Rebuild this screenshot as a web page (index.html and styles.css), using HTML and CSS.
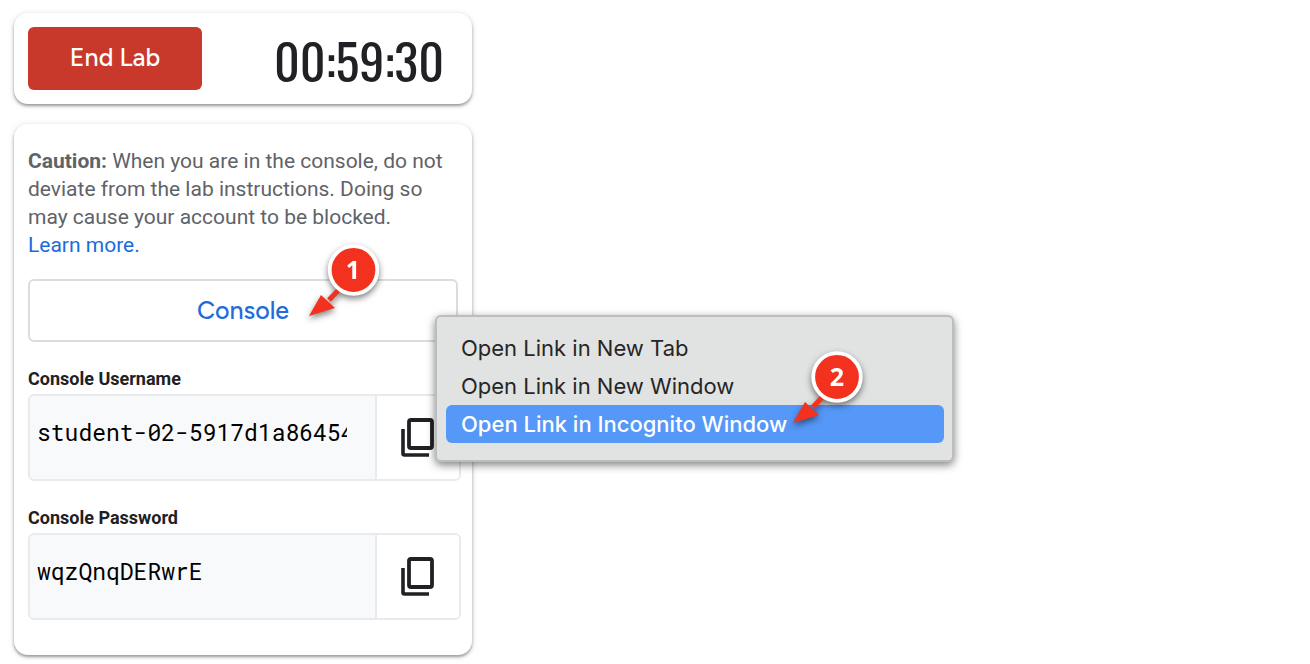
FILE: index.html
```html
<!DOCTYPE html>
<html lang="en">
<head>
<meta charset="utf-8">
<title>Lab controls</title>
<link rel="stylesheet" href="styles.css">
</head>
<body>
<svg class="sprite" aria-hidden="true">
  <symbol id="copy" viewBox="0 0 36 40">
    <rect x="9" y="2" width="23" height="28" rx="2" fill="none" stroke="currentColor" stroke-width="3.800"/>
    <path d="M3 11v24.500a1.500 1.500 0 0 0 1.500 1.500H29" fill="none" stroke="currentColor" stroke-width="3.600"/>
  </symbol>
</svg>
<main class="panel">
  <section class="card timer-card">
    <button class="end-lab" type="button">End Lab</button>
    <time class="timer">00:59:30</time>
  </section>
  <section class="card details">
    <p class="caution"><strong>Caution:</strong> When you are in the console, do not deviate from the lab instructions. Doing so may cause your account to be blocked. <a class="learn" href="#learn">Learn more.</a></p>
    <a class="console" href="#console">Console</a>
    <div class="field">
      <label class="label" for="username">Console Username</label>
      <div class="copy-box">
        <input class="value" id="username" type="text" readonly value="student-02-5917d1a86454">
        <button class="copy" type="button" aria-label="Copy username"><svg class="copy-icon"><use href="#copy"/></svg></button>
      </div>
    </div>
    <div class="field">
      <label class="label" for="password">Console Password</label>
      <div class="copy-box">
        <input class="value" id="password" type="text" readonly value="wqzQnqDERwrE">
        <button class="copy" type="button" aria-label="Copy password"><svg class="copy-icon"><use href="#copy"/></svg></button>
      </div>
    </div>
  </section>
  <div class="menu" role="menu">
    <button class="item" type="button" role="menuitem">Open Link in New Tab</button>
    <button class="item" type="button" role="menuitem">Open Link in New Window</button>
    <button class="item active" type="button" role="menuitem">Open Link in Incognito Window</button>
  </div>
  <svg class="pin pin-one" viewBox="0 0 84 84">
    <path d="M48 37 28 58" stroke="#f3311f" stroke-width="5"/>
    <path d="M8 74 20 53 34 66z" fill="#f3311f"/>
    <circle cx="52.500" cy="28" r="23.800" fill="#f3311f" stroke="#fff" stroke-width="3.800"/>
    <text class="pin-text" x="52" y="37">1</text>
  </svg>
  <svg class="pin pin-two" viewBox="0 0 84 84">
    <path d="M48 37 28 58" stroke="#f3311f" stroke-width="5"/>
    <path d="M8 74 20 53 34 66z" fill="#f3311f"/>
    <circle cx="52" cy="28" r="23.800" fill="#f3311f" stroke="#fff" stroke-width="3.800"/>
    <text class="pin-text" x="52" y="37">2</text>
  </svg>
</main>
</body>
</html>
```
FILE: styles.css
```css
* { box-sizing: border-box; }
body {
  margin: 0;
  background: #fff;
  color: #202124;
  font-family: Roboto, "Liberation Sans", sans-serif;
}
button, input { font: inherit; color: inherit; margin: 0; }
.sprite { position: absolute; width: 0; height: 0; }
.panel {
  position: relative;
  display: flex;
  flex-direction: column;
  gap: 20px;
  max-width: 486px;
  padding: 13px 14px 9px;
}
.card {
  background: #fff;
  border-radius: 14px;
  box-shadow: 0 2px 3px rgba(0, 0, 0, .35), 0 1px 7px rgba(0, 0, 0, .12);
}
.timer-card {
  display: flex;
  align-items: center;
  justify-content: space-between;
  padding: 14px 28px 14px 14px;
}
.end-lab {
  min-width: 174px;
  padding: 15px 24px 17px;
  border: 0;
  border-radius: 6px;
  background: #c8382b;
  color: #fff;
  font: 500 25px/31px "Google Sans", "Product Sans", Figtree, Outfit, Roboto, sans-serif;
}
.timer {
  font: 50px/60px Oswald, "Roboto Condensed", "Liberation Sans Narrow", sans-serif;
}
.details { padding: 23px 11px 35px 14px; }
.caution {
  margin: 0 0 20px;
  color: #5f6368;
  font-size: 21px;
  line-height: 28px;
}
.learn { display: block; color: #1a6be0; text-decoration: none; }
.console {
  display: block;
  margin-right: 3px;
  padding: 14px;
  border: 2px solid #dadce0;
  border-radius: 6px;
  color: #1f6bdc;
  font: 500 25px/31px "Google Sans", "Product Sans", Figtree, Outfit, Roboto, sans-serif;
  text-align: center;
  text-decoration: none;
}
.field { margin-top: 25px; }
.label {
  display: block;
  margin-bottom: 3px;
  font-size: 18px;
  font-weight: 700;
  line-height: 24px;
}
.copy-box {
  display: flex;
  border: 2px solid #e8eaed;
  border-radius: 6px;
  overflow: hidden;
}
.value {
  flex: 1;
  min-width: 0;
  padding: 18px 28px 29px 7px;
  border: 0;
  border-right: 2px solid #e8eaed;
  border-radius: 0;
  background: #f8f9fb;
  color: #000;
  font: 23px/36px "Roboto Mono", "DejaVu Sans Mono", monospace;
}
.copy {
  display: flex;
  align-items: center;
  justify-content: center;
  width: 82px;
  padding: 0;
  border: 0;
  background: #fff;
}
.copy-icon { width: 36px; height: 40px; }
.menu {
  position: absolute;
  left: 435px;
  top: 315px;
  width: 519px;
  padding: 12px 8px 17px 9px;
  border: 2px solid #bcbebd;
  border-radius: 6px;
  background: #e1e3e2;
  box-shadow: 0 3px 8px rgba(0, 0, 0, .5);
}
.item {
  display: block;
  width: 100%;
  padding: 4px 15px;
  border: 0;
  border-radius: 6px;
  background: none;
  color: #262626;
  font: 22px/30px Inter, sans-serif;
  text-align: left;
}
.active { background: #5598f8; color: #fff; font-weight: 500; }
.pin {
  position: absolute;
  width: 84px;
  height: 84px;
  filter: drop-shadow(0 3px 3px rgba(0, 0, 0, .5));
}
.pin-one { left: 301px; top: 242px; }
.pin-two { left: 785px; top: 349px; }
.pin-text {
  fill: #fff;
  font: 700 25px "Open Sans", sans-serif;
  text-anchor: middle;
}
```
